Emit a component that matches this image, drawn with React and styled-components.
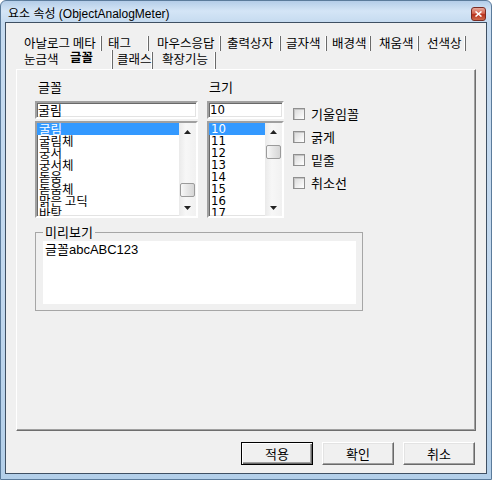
import styled, { createGlobalStyle } from "styled-components";

const GlobalStyle = createGlobalStyle`
  html, body { margin: 0; padding: 0; background: #ffffff; }
  body {
    font-family: "Noto Sans CJK KR", "Liberation Sans", sans-serif;
    font-size: 13px;
    color: #000;
  }
`;

const Window = styled.div`
  width: 492px;
  height: 480px;
  box-sizing: border-box;
  display: flex;
  flex-direction: column;
  border: 1px solid #5b7b9b;
  border-radius: 6px 6px 0 0;
  padding: 0 4px 5px 4px;
  background: linear-gradient(180deg, #b4cde8 0px, #d4e5f6 10px, #c6dbf0 21px, #c2d8ee 60%, #b3cfe9 100%);
`;

const TitleBar = styled.div`
  height: 21px;
  display: flex;
  align-items: flex-start;
  justify-content: space-between;
  padding: 0 1px 0 3px;
`;

const TitleText = styled.div`
  padding-top: 5px;
  line-height: 16px;
  font-size: 12px;
  font-family: "Liberation Sans", "Noto Sans CJK KR", sans-serif;
`;

const CloseButton = styled.div`
  width: 15px;
  height: 14px;
  margin-top: 6px;
  box-sizing: border-box;
  border: 1px solid #7a2b22;
  border-radius: 3px;
  background: linear-gradient(180deg, #e8a89a 0%, #d4634d 45%, #b8321c 55%, #cf6a4c 100%);
  display: flex;
  align-items: center;
  justify-content: center;
`;

const Client = styled.div`
  flex: 1;
  display: flex;
  flex-direction: column;
  border: 1px solid #3f5063;
  background: #f0f0f0;
  padding: 13px 10px 8px 10px;
`;

const TabRow = styled.div`
  display: flex;
  align-items: flex-start;
  height: ${(p) => p.h}px;
  margin-bottom: ${(p) => p.mb || 0}px;
`;

const Tab = styled.div`
  box-sizing: border-box;
  width: ${(p) => p.w}px;
  height: ${(p) => (p.active ? p.h + 2 : p.h)}px;
  margin-top: ${(p) => (p.active ? -2 : 0)}px;
  padding-left: ${(p) => p.pad}px;
  line-height: 14px;
  font-size: 12.5px;
  font-weight: ${(p) => (p.active ? 700 : 400)};
  white-space: nowrap;
  border-right: ${(p) => (p.plain ? "none" : "1px solid #6a6a6a")};
  box-shadow: ${(p) => (p.plain ? "none" : "inset -1px 0 0 #ffffff")};
`;

const Pane = styled.div`
  flex: 1;
  box-sizing: border-box;
  border: 1px solid;
  border-color: #ffffff #6e6e6e #6e6e6e #ffffff;
  box-shadow: inset -1px -1px 0 #a0a0a0;
  padding: 10px 0 0 18px;
  display: flex;
  flex-direction: column;
  align-items: flex-start;
`;

const TopSection = styled.div`
  display: flex;
  gap: 9px;
`;

const Column = styled.div`
  width: ${(p) => p.w}px;
  display: flex;
  flex-direction: column;
`;

const FieldLabel = styled.div`
  height: 14px;
  line-height: 14px;
  padding-left: ${(p) => p.pad}px;
  margin-bottom: 7px;
`;

const sunken = `
  border: 2px solid;
  border-color: #a0a0a0 #ffffff #ffffff #a0a0a0;
  box-shadow: inset 1px 1px 0 #696969, inset -1px -1px 0 #e3e3e3;
`;

const TextBox = styled.div`
  box-sizing: border-box;
  height: 18px;
  background: #fff;
  ${sunken}
  padding-left: 1px;
  line-height: 14px;
  font-family: ${(p) => p.font};
  font-size: ${(p) => p.size}px;
`;

const ListBox = styled.div`
  box-sizing: border-box;
  height: 97px;
  margin-top: 2px;
  background: #fff;
  ${sunken}
  display: flex;
  overflow: hidden;
`;

const Items = styled.div`
  flex: 1;
  overflow: hidden;
`;

const Item = styled.div`
  height: 12px;
  line-height: 12px;
  padding-left: 2px;
  white-space: pre;
  font-family: ${(p) => p.font};
  font-size: ${(p) => p.size}px;
  background: ${(p) => (p.selected ? "#3399ff" : "transparent")};
  color: ${(p) => (p.selected ? "#ffffff" : "#000000")};
`;

const ScrollBar = styled.div`
  width: 17px;
  display: flex;
  flex-direction: column;
  background: linear-gradient(90deg, #eaeaea, #f7f7f7 40%, #f1f1f1);
`;

const Arrow = styled.div`
  height: 17px;
  display: flex;
  align-items: center;
  justify-content: center;
`;

const Track = styled.div`
  flex: 1;
  padding-top: ${(p) => p.offset}px;
`;

const Thumb = styled.div`
  width: 15px;
  height: 14px;
  box-sizing: border-box;
  margin-left: 1px;
  border: 1px solid #9b9b9b;
  border-radius: 2px;
  background: linear-gradient(90deg, #f8f8f8, #e6e6e6 50%, #d6d6d6);
`;

const CheckColumn = styled.div`
  padding-top: 22px;
  display: flex;
  flex-direction: column;
`;

const CheckRow = styled.label`
  height: 23px;
  display: flex;
  align-items: center;
  gap: 6px;
  font-size: 13px;
`;

const CheckBox = styled.span`
  width: 12px;
  height: 12px;
  box-sizing: border-box;
  border: 1px solid #8f8f8f;
  background: linear-gradient(135deg, #d8d8d8, #f4f4f4 70%, #ffffff);
  box-shadow: inset 1px 1px 0 #c4c4c4;
`;

const Group = styled.fieldset`
  width: 328px;
  box-sizing: border-box;
  margin: 7px 0 0 0;
  padding: 0 6px 6px 7px;
  border: 1px solid #a6a6a6;
  min-width: 0;
`;

const Legend = styled.legend`
  padding: 0 2px;
  line-height: 14px;
  font-size: 13px;
`;

const PreviewBox = styled.div`
  height: 63px;
  margin-top: 2px;
  background: #ffffff;
  padding: 2px 2px;
  box-sizing: border-box;
  line-height: 14px;
  font-size: 13px;
  font-family: "Liberation Sans", "Noto Sans CJK KR", sans-serif;
`;

const ButtonRow = styled.div`
  display: flex;
  justify-content: flex-end;
  gap: 9px;
  margin-top: 11px;
  padding-right: 1px;
`;

const Button = styled.div`
  width: 72px;
  height: 23px;
  box-sizing: border-box;
  display: flex;
  align-items: center;
  justify-content: center;
  font-size: 13px;
  background: #f0f0f0;
  border: 1px solid;
  border-color: ${(p) => (p.primary ? "#000000" : "#ffffff #696969 #696969 #ffffff")};
  box-shadow: ${(p) =>
    p.primary
      ? "inset 1px 1px 0 #ffffff, inset -1px -1px 0 #696969, inset -2px -2px 0 #a0a0a0"
      : "inset -1px -1px 0 #a0a0a0, inset 1px 1px 0 #e3e3e3"};
`;

const Caret = ({ down }) => (
  <svg width="7" height="4" viewBox="0 0 7 4">
    <polygon points={down ? "0,0 7,0 3.5,4" : "0,4 7,4 3.5,0"} fill="#222" />
  </svg>
);

const Scroll = ({ offset }) => (
  <ScrollBar>
    <Arrow>
      <Caret />
    </Arrow>
    <Track offset={offset}>
      <Thumb />
    </Track>
    <Arrow>
      <Caret down />
    </Arrow>
  </ScrollBar>
);

const row1 = [
  ["아날로그 메타", 86, 8],
  ["태그", 47, 6],
  ["마우스응답", 72, 8],
  ["출력상자", 60, 6],
  ["글자색", 46, 5],
  ["배경색", 44, 5],
  ["채움색", 48, 8],
  ["선색상", 47, 8],
];

const fonts = ["굴림", "굴림체", "궁서", "궁서체", "돋움", "돋움체", "맑은 고딕", "바탕"];
const sizes = ["10", "11", "12", "13", "14", "15", "16", "17"];
const checks = ["기울임꼴", "굵게", "밑줄", "취소선"];

const KR = `"Noto Sans CJK KR", sans-serif`;
const NARROW = `"Liberation Sans Narrow", "DejaVu Sans Condensed", "Liberation Sans", sans-serif`;

export default function App() {
  return (
    <>
      <GlobalStyle />
      <Window>
        <TitleBar>
          <TitleText>요소 속성 (ObjectAnalogMeter)</TitleText>
          <CloseButton>
            <svg width="7" height="6" viewBox="0 0 7 6">
              <path d="M0.5 0.5 L6.5 5.5 M6.5 0.5 L0.5 5.5" stroke="#fff" strokeWidth="1.6" />
            </svg>
          </CloseButton>
        </TitleBar>
        <Client>
          <TabRow h={15} mb={1}>
            {row1.map(([t, w, pad]) => (
              <Tab key={t} w={w} h={15} pad={pad}>
                {t}
              </Tab>
            ))}
          </TabRow>
          <TabRow h={17}>
            <Tab w={47} h={17} pad={8} plain>
              눈금색
            </Tab>
            <Tab w={50} h={17} pad={7} active>
              글꼴
            </Tab>
            <Tab w={40} h={17} pad={4}>
              클래스
            </Tab>
            <Tab w={63} h={17} pad={9}>
              확장기능
            </Tab>
          </TabRow>
          <Pane>
            <TopSection>
              <Column w={163}>
                <FieldLabel pad={3}>글꼴</FieldLabel>
                <TextBox font={KR} size={13}>굴림</TextBox>
                <ListBox>
                  <Items>
                    {fonts.map((f, i) => (
                      <Item key={f} font={KR} size={12.5} selected={i === 0}>
                        {f}
                      </Item>
                    ))}
                  </Items>
                  <Scroll offset={43} />
                </ListBox>
              </Column>
              <Column w={77}>
                <FieldLabel pad={2}>크기</FieldLabel>
                <TextBox font={NARROW} size={13}>10</TextBox>
                <ListBox>
                  <Items>
                    {sizes.map((s, i) => (
                      <Item key={s} font={NARROW} size={13} selected={i === 0}>
                        {s}
                      </Item>
                    ))}
                  </Items>
                  <Scroll offset={5} />
                </ListBox>
              </Column>
              <CheckColumn>
                {checks.map((c) => (
                  <CheckRow key={c}>
                    <CheckBox />
                    {c}
                  </CheckRow>
                ))}
              </CheckColumn>
            </TopSection>
            <Group>
              <Legend>미리보기</Legend>
              <PreviewBox>글꼴abcABC123</PreviewBox>
            </Group>
          </Pane>
          <ButtonRow>
            <Button primary>적용</Button>
            <Button>확인</Button>
            <Button>취소</Button>
          </ButtonRow>
        </Client>
      </Window>
    </>
  );
}
